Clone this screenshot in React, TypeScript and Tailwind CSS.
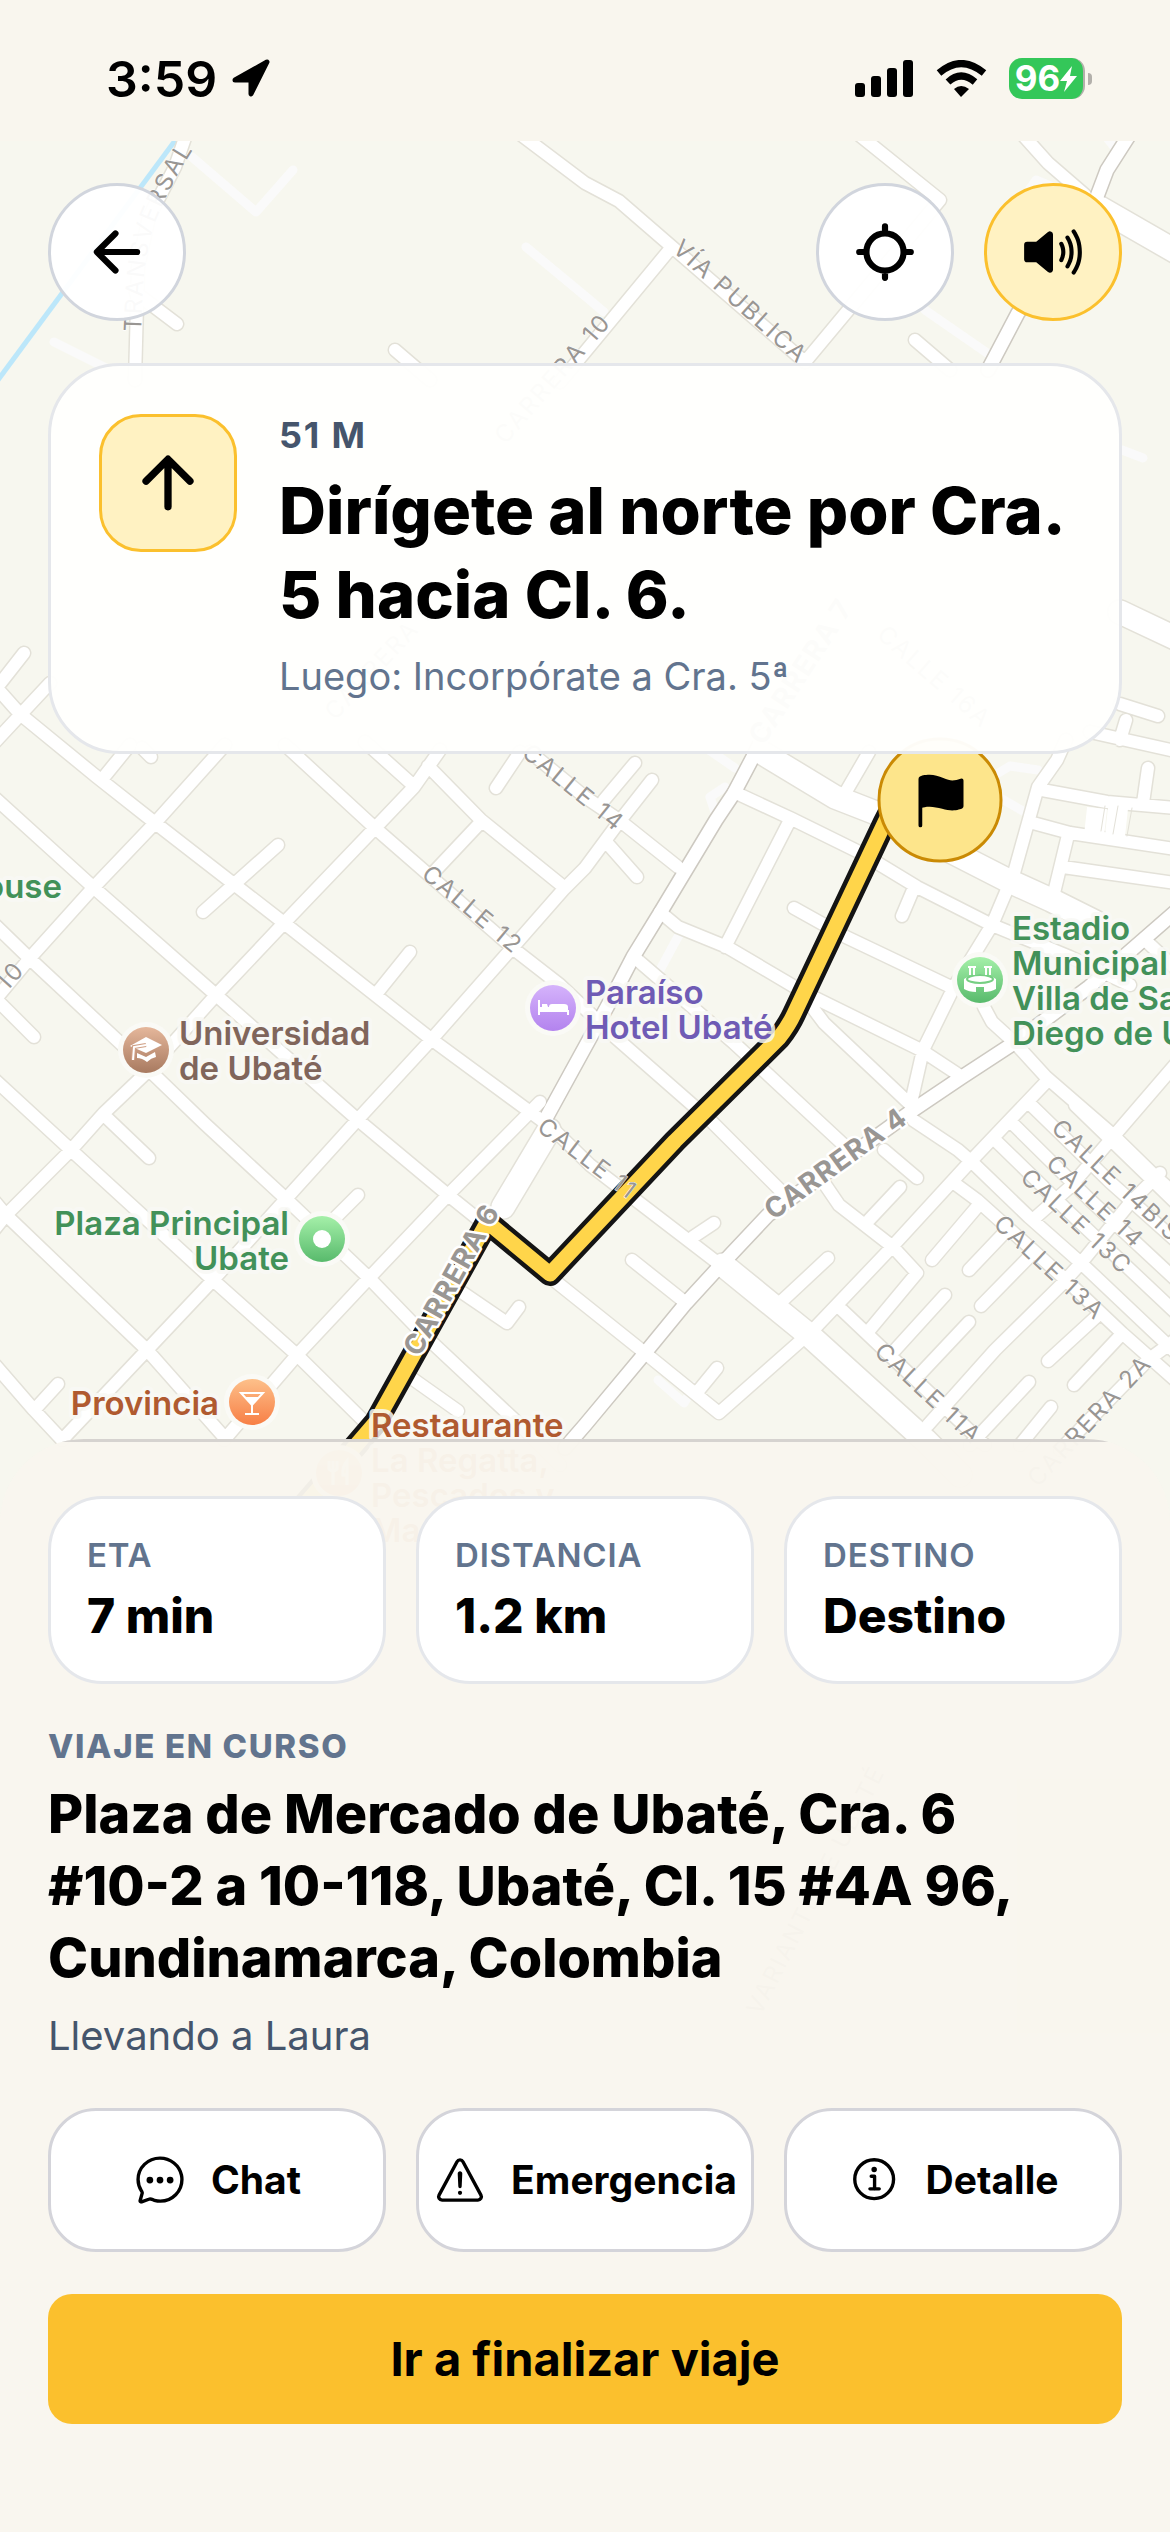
import React from "react";
import {
    IoArrowBackOutline,
    IoArrowUpOutline,
    IoChatbubbleEllipsesOutline,
    IoFlag,
    IoInformationCircleOutline,
    IoLocate,
    IoVolumeHigh,
    IoWarningOutline,
} from "react-icons/io5";

const streets = [
    "M-5 686 L20 714 L97 777 L154 822 L284 923 L431 1039 L552 1128 L590 1165 L697 1247 L723 1267",
    "M-5 798 L93 887 L216 995 L358 1120 L448 1195 L550 1277 L585 1305 L645 1353 L719 1413 L805 1337",
    "M-5 925 L28 957 L146 1067 L205 1124 L285 1198 L369 1278 L425 1336 L520 1425 L560 1465",
    "M-5 1080 L71 1150 L213 1280 L297 1355 L375 1432",
    "M-10 1196 L6 1215 L147 1350 L224 1437",
    "M-5 1365 L34 1410 L62 1440",
    "M106 1117 L149 1158",
    "M285 745 L375 828 L515 950 L560 985 L615 1037 L712 1122 L785 1195",
    "M365 742 L414 786",
    "M428 766 L481 820 L565 888",
    "M530 752 L585 797 L619 820 L678 867",
    "M607 843 L637 877",
    "M225 745 L155 823 L93 888 L30 958 L-5 1000",
    "M0 1003 L34 1037",
    "M440 750 L414 787 L375 828 L284 923 L216 995 L146 1073 L104 1113 L71 1150 L6 1215 L-10 1235",
    "M652 780 L619 822 L585 868 L563 890 L513 947 L431 1040 L360 1117 L285 1200 L213 1280 L147 1350 L62 1440",
    "M635 763 L604 800",
    "M278 845 L203 912",
    "M410 952 L377 993",
    "M481 822 L433 873",
    "M520 752 L496 788",
    "M104 777 L130 745",
    "M142 748 L151 757",
    "M540 1102 L448 1195 L369 1278 L297 1355 L224 1440",
    "M358 1195 L323 1230",
    "M463 1293 L507 1323 L519 1307",
    "M410 1377 L458 1411",
    "M58 1384 L37 1407",
    "M734 792 L790 818 L861 853 L917 887 L992 925 L1070 957 L1130 985",
    "M660 912 L678 927 L727 947 L805 993 L921 1050 L962 1077",
    "M794 908 L846 937 L951 987",
    "M790 820 L725 947",
    "M869 752 L844 795",
    "M913 890 L902 916",
    "M1066 740 L1057 760 L1038 787 L1014 873 L992 925 L954 987 L923 1050 L911 1103",
    "M1042 790 L1107 802 L1175 808",
    "M1033 823 L1070 833 L1175 849",
    "M1068 835 L1053 897",
    "M1063 867 L1175 883",
    "M1148 768 L1143 803",
    "M1090 732 L1175 751",
    "M809 1003 L824 1023 L913 1107",
    "M634 957 L734 1043 L846 1147",
    "M824 1183 L839 1205 L893 1247 L917 1273 L867 1333",
    "M984 1007 L992 1022 L1014 1042 L1046 1077 L1113 1135 L1156 1177 L1175 1194",
    "M1175 1065 L1113 1137 L1070 1187 L1036 1217",
    "M1048 1080 L1007 1123 L969 1163 L891 1248 L813 1330",
    "M913 1120 L958 1150 L973 1163 L1029 1217 L1081 1263 L1175 1352",
    "M954 1183 L977 1200 L1066 1280 L1122 1333 L1175 1380",
    "M995 1140 L1070 1213 L1175 1312",
    "M1012 1123 L1090 1200 L1175 1279",
    "M1029 1103 L1110 1182 L1175 1240",
    "M1075 1105 L1175 1202",
    "M1145 940 L1175 968",
    "M1160 1173 L1130 1203 L1081 1263 L1063 1283 L995 1350 L928 1425",
    "M1175 1340 L1148 1360 L1060 1450",
    "M900 1187 L869 1220",
    "M828 1258 L783 1300",
    "M714 1223 L693 1237",
    "M632 1260 L686 1303",
    "M717 1368 L699 1390",
    "M977 1207 L932 1260",
    "M1007 1230 L969 1270",
    "M1029 1257 L981 1306",
    "M945 1295 L895 1350",
    "M969 1322 L921 1373",
    "M842 1310 L902 1367 L985 1445",
    "M1096 1317 L1048 1361",
    "M1119 1337 L1074 1385",
    "M1029 1382 L970 1445",
    "M1051 1407 L1020 1445",
    "M884 1150 L917 1178",
    "M186 135 L175 167 L149 217 L138 267 L135 380",
    "M136 293 L177 324",
    "M520 134 L585 183 L619 201 L671 246 L805 362",
    "M671 248 L585 352 L560 382",
    "M395 350 L430 380",
    "M858 134 L940 200 L805 362",
    "M1022 134 L1048 163 L1085 195",
    "M915 340 L950 370",
    "M24 653 L-5 690",
    "M50 683 L-5 742",
    "M1120 704 L1158 716",
    "M1126 720 L1120 740",
];

const avenues = [
    "M764 735 L753 757 L734 793 L716 820 L660 913 L633 957 L607 1007 L545 1120",
    "M1175 912 L1089 987 L1014 1043 L962 1077 L913 1110 L768 1215 L719 1267 L686 1303 L645 1353 L585 1425 L565 1448",
    "M1130 134 L1107 170 L1090 215 L1018 313 L988 370",
];

const wideRoads = [
    "M723 1265 L809 1335 L925 1440 L960 1475",
    "M764 754 L835 797 L876 813 L1007 880 L1051 900 L1095 922",
    "M1100 208 L1180 254",
    "M1120 612 L1175 638",
    "M549 1130 L503 1207",
];

const paths = [
    "M192 157 L256 212 L293 170",
    "M54 342 L110 370",
    "M526 247 L585 296 L604 312",
    "M925 310 L990 355",
    "M1104 134 L1115 148",
    "M1022 200 L1036 180 L1060 190",
    "M1122 450 L1143 458",
    "M709 750 L735 768",
    "M995 775 L1010 766 L1038 770",
    "M1000 798 L1030 815",
    "M680 933 L660 970",
    "M658 1380 L684 1403 L694 1386",
    "M725 787 L710 797 L715 812",
];

const streetLabels = [
    { text: "CALLE 12", x: 473, y: 909, angle: 40 },
    { text: "CALLE 14", x: 574, y: 787, angle: 39 },
    { text: "CALLE 11", x: 588, y: 1158, angle: 37 },
    { text: "CALLE 14BIS", x: 1117, y: 1180, angle: 43 },
    { text: "CALLE 14", x: 1096, y: 1201, angle: 43 },
    { text: "CALLE 13C", x: 1077, y: 1221, angle: 43 },
    { text: "CALLE 13A", x: 1050, y: 1267, angle: 43 },
    { text: "CALLE 11A", x: 929, y: 1393, angle: 43 },
    { text: "CALLE 16A", x: 935, y: 676, angle: 41 },
    { text: "CARRERA 2A", x: 1089, y: 1420, angle: -47 },
    { text: "CARRERA 10", x: 552, y: 378, angle: -49 },
    { text: "CARRERA 9", x: 380, y: 660, angle: -47 },
    { text: "CARRERA 10", x: -35, y: 1025, angle: -48 },
    { text: "VÍA PUBLICA", x: 741, y: 301, angle: 42 },
    { text: "VARIANTE DE UBATÉ", x: 815, y: 1890, angle: -63 },
];

const avenueLabels = [
    { text: "CARRERA 6", x: 452, y: 1280, angle: -61 },
    { text: "CARRERA 4", x: 836, y: 1164, angle: -36 },
    { text: "CARRERA 7", x: 801, y: 672, angle: -57 },
];

const places = [
    { lines: ["House"], x: 62, y: 898, color: "#429159", anchor: "end" },
    { lines: ["Universidad", "de Ubaté"], x: 179, y: 1045, color: "#80655b", anchor: "start" },
    { lines: ["Paraíso", "Hotel Ubaté"], x: 585, y: 1004, color: "#6f5bb5", anchor: "start" },
    { lines: ["Estadio", "Municipal", "Villa de San", "Diego de Ubaté"], x: 1012, y: 940, color: "#429159", anchor: "start" },
    { lines: ["Plaza Principal", "Ubate"], x: 289, y: 1235, color: "#429159", anchor: "end" },
    { lines: ["Provincia"], x: 219, y: 1415, color: "#b05a30", anchor: "end" },
    { lines: ["Restaurante", "La Regatta,", "Pescados y", "Mariscos"], x: 371, y: 1437, color: "#b05a30", anchor: "start" },
] as const;

const route = [
    "M905 783 L885 822 L794 1014 Q789 1025 779 1038 L675 1141 L550 1274 L486 1221",
    "M489 1219 L376 1422 L352 1450 L300 1510",
].join(" ");

const Marker = ({ x, y, fill, children }: { x: number; y: number; fill: string; children?: React.ReactNode }) => (
    <g transform={`translate(${x} ${y})`}>
        <circle r="28" fill="#fafaf6" />
        <circle r="23" fill={`url(#${fill})`} />
        {children}
    </g>
);

const Gradient = ({ id, from, to }: { id: string; from: string; to: string }) => (
    <linearGradient id={id} x1="0" y1="0" x2="0" y2="1">
        <stop offset="0" stopColor={from} />
        <stop offset="1" stopColor={to} />
    </linearGradient>
);

const RoadLayer = ({ lines, color, width }: { lines: string[]; color: string; width: number }) => (
    <path d={lines.join(" ")} stroke={color} strokeWidth={width} />
);

const CityMap = () => (
    <svg
        className="absolute inset-0 h-full w-full"
        viewBox="0 141 1170 2391"
        preserveAspectRatio="xMidYMin slice"
        role="img"
        aria-label="Mapa de Ubaté"
    >
        <defs>
            <Gradient id="brown" from="#e5b79b" to="#a87a60" />
            <Gradient id="purple" from="#d5b3fb" to="#b383ee" />
            <Gradient id="green" from="#a5f0a9" to="#58ba6c" />
            <Gradient id="orange" from="#fdc08a" to="#f77f46" />
            <path id="transversal" d="M141 332 L143 290 Q145 252 156 220 Q168 190 190 154" />
        </defs>

        <rect y="141" width="1170" height="2391" fill="#f7f7ef" />
        <path d="M177 138 L-5 384" stroke="#bce7fa" strokeWidth="5" />

        <g fill="none" strokeLinecap="round" strokeLinejoin="round">
            <RoadLayer lines={paths} color="#fafafa" width={9} />
            <RoadLayer lines={streets} color="#e3e1d8" width={15} />
            <RoadLayer lines={wideRoads} color="#e3e1d8" width={26} />
            <RoadLayer lines={avenues} color="#cdc9c1" width={16} />
            <RoadLayer lines={streets} color="#ffffff" width={12} />
            <RoadLayer lines={wideRoads} color="#ffffff" width={23} />
            <RoadLayer lines={avenues} color="#ffffff" width={13} />
            <path d="M1097 808 L1094 836 M1118 808 L1115 836" stroke="#ffffff" strokeWidth="20" strokeLinecap="butt" />
            <path d="M1105 806 L1101 831 M1118 806 L1113 834 M1132 808 L1127 836" stroke="#e3e1d8" strokeWidth="1" />
            <path d={route} stroke="#141414" strokeWidth="24" strokeLinecap="butt" />
            <path d={route} stroke="#ffd54a" strokeWidth="15" strokeLinecap="butt" />
        </g>

        <g fill="#999693" fontFamily="Inter, sans-serif" textAnchor="middle">
            <g fontSize="24" letterSpacing="2" stroke="#ffffff" strokeWidth="1" paintOrder="stroke">
                {streetLabels.map((label, i) => (
                    <text key={i} transform={`translate(${label.x} ${label.y}) rotate(${label.angle})`} dy="9">
                        {label.text}
                    </text>
                ))}
                <text textAnchor="start">
                    <textPath href="#transversal">TRANSVERSAL</textPath>
                </text>
            </g>
            <g fontSize="28" fontWeight="700" letterSpacing="1" stroke="#ffffff" strokeWidth="5" strokeLinejoin="round" paintOrder="stroke">
                {avenueLabels.map((label) => (
                    <text key={label.text} transform={`translate(${label.x} ${label.y}) rotate(${label.angle})`} dy="9">
                        {label.text}
                    </text>
                ))}
            </g>
        </g>

        <Marker x={146} y={1050} fill="brown">
            <path d="M-16 -4 L0 -13 L16 -5 L0 3 Z" fill="#fff" />
            <path d="M-9 3 L0 7 L9 2 L10 7 Q5 8 1 12 Q-4 8 -9 8 Z" fill="#fff" />
            <path d="M0 -5 L-12 -3 L-13 10" fill="none" stroke="#cf9f84" strokeWidth="4" />
            <path d="M0 -5 L-12 -3 L-13 10" fill="none" stroke="#fff" strokeWidth="2" />
        </Marker>
        <Marker x={553} y={1008} fill="purple">
            <path d="M-14 -8 V7 M-14 3 H15 V7 M-14 0 H15" stroke="#fff" strokeWidth="2" fill="none" />
            <path d="M-11 -4 H-6 L-5 -1 H-11 Z M-4 -1 Q-4 -4 -1 -4 H11 Q15 -4 15 -1 Z M-14 1 H15 V4 H-14 Z" fill="#fff" />
        </Marker>
        <Marker x={980} y={980} fill="green">
            <path d="M-16 -1 Q0 -11 16 -1 V9 Q11 12 4 12 V7 H-4 V12 Q-11 12 -16 9 Z" fill="#fff" />
            <ellipse cy="-1" rx="13" ry="4" fill="none" stroke="#76cf83" strokeWidth="2" />
            <path d="M-12 -13 H-4 M4 -13 H12 M-10 -13 V-5 M-6 -13 V-5 M6 -13 V-5 M10 -13 V-5" stroke="#fff" strokeWidth="2" />
        </Marker>
        <Marker x={322} y={1239} fill="green">
            <circle r="9" fill="#fff" />
        </Marker>
        <Marker x={252} y={1402} fill="orange">
            <path d="M-11 -9 H11 L0 3 Z M0 2 V12 M-7 12 H7" fill="none" stroke="#fff" strokeWidth="2" />
            <path d="M-7 -5 H7 L0 3 Z" fill="#fff" />
        </Marker>
        <Marker x={339} y={1473} fill="orange">
            <path d="M-6 -12 V12 M-10 -12 V-4 Q-6 0 -2 -4 V-12 M8 12 V-12 Q3 -6 4 2 H8" fill="none" stroke="#fff" strokeWidth="3" />
        </Marker>

        <g fontFamily="Inter, sans-serif" fontSize="33" fontWeight="600" stroke="#f9f9f5" strokeOpacity="0.85" strokeWidth="8" strokeLinejoin="round" paintOrder="stroke">
            {places.map((place) => (
                <text key={place.lines[0]} y={place.y} fill={place.color} textAnchor={place.anchor}>
                    {place.lines.map((line, i) => (
                        <tspan key={line} x={place.x} dy={i === 0 ? 0 : 35}>
                            {line}
                        </tspan>
                    ))}
                </text>
            ))}
        </g>

        <g transform="translate(940 800)">
            <circle r="61" fill="#fde58b" stroke="#ca8a04" strokeWidth="3" />
            <IoFlag x="-29" y="-29" size={60} />
        </g>
    </svg>
);

const StatusBar = () => (
    <header className="flex h-[141px] items-center justify-between bg-[#f9f6ee] pt-4 pr-[78px] pl-[106px]">
        <div className="flex items-center gap-[14px]">
            <span className="text-[50px] leading-none font-semibold">3:59</span>
            <svg className="h-10 w-10" viewBox="0 0 40 40" aria-label="Ubicación">
                <path
                    d="M36 4 L20 36 V22 H4 Z"
                    transform="translate(0 -1)"
                    stroke="#000"
                    strokeWidth="5"
                    strokeLinejoin="round"
                />
            </svg>
        </div>
        <div className="flex items-center gap-[22px]">
            <svg className="h-[38px] w-[59px]" viewBox="0 0 59 38" aria-label="Señal">
                <rect y="23" width="10" height="14" rx="3" />
                <rect x="16" y="16" width="10" height="21" rx="3" />
                <rect x="32" y="8" width="10" height="29" rx="3" />
                <rect x="48" width="10" height="37" rx="3" />
            </svg>
            <svg className="h-[38px] w-[51px]" viewBox="0 0 51 38" aria-label="Wi-Fi">
                <path d="M3 13 Q25 -6 48 13" fill="none" stroke="#000" strokeWidth="7" />
                <path d="M12 22 Q25 10 39 22" fill="none" stroke="#000" strokeWidth="7" />
                <path d="M18 29 Q25 23 33 29 L25 37 Z" />
            </svg>
            <div className="flex items-center gap-[3px]">
                <div className="flex h-[41px] w-[76px] items-center justify-center rounded-[13px] border-r-2 border-[#b3b0ab] bg-[#34c759] text-white">
                    <span className="text-[35px] leading-none font-bold">96</span>
                    <svg className="h-[26px] w-[17px]" viewBox="0 0 17 26" fill="currentColor" aria-label="Cargando">
                        <path d="M12 0 L0 15 H7 L4 26 L17 10 H10 Z" />
                    </svg>
                </div>
                <div className="h-3 w-1 rounded-r-full bg-[#b3b0ab]" />
            </div>
        </div>
    </header>
);

const roundButton = "flex size-[138px] items-center justify-center rounded-full border-3";

const MapControls = () => (
    <div className="flex justify-between">
        <button type="button" aria-label="Volver" className={`${roundButton} border-[#d1d5dd] bg-white/95`}>
            <IoArrowBackOutline size={66} />
        </button>
        <div className="flex gap-[30px]">
            <button type="button" aria-label="Centrar mapa" className={`${roundButton} border-[#d1d5dd] bg-white/95`}>
                <IoLocate size={66} />
            </button>
            <button type="button" aria-label="Sonido" className={`${roundButton} border-[#fbc02d] bg-[#fff2c2]`}>
                <IoVolumeHigh size={66} />
            </button>
        </div>
    </div>
);

const NextStep = () => (
    <section className="flex items-start gap-[42px] rounded-[72px] border-3 border-[#e5e7eb] bg-[#fffffd]/97 p-12">
        <div className="flex size-[138px] shrink-0 items-center justify-center rounded-[42px] border-3 border-[#fbc02d] bg-[#fff2c2]">
            <IoArrowUpOutline size={78} />
        </div>
        <div className="flex flex-col gap-3">
            <p className="text-[36px] leading-[43px] font-bold tracking-wider text-slate-600">51 M</p>
            <h1 className="text-[65px] leading-[84px] font-extrabold">Dirígete al norte por Cra. 5 hacia Cl. 6.</h1>
            <p className="text-[38px] leading-[54px] text-slate-500">Luego: Incorpórate a Cra. 5ª</p>
        </div>
    </section>
);

const stats = [
    { label: "ETA", value: "7 min" },
    { label: "DISTANCIA", value: "1.2 km" },
    { label: "DESTINO", value: "Destino" },
];

const actions = [
    { label: "Chat", icon: <IoChatbubbleEllipsesOutline size={54} className="shrink-0" /> },
    { label: "Emergencia", icon: <IoWarningOutline size={54} className="shrink-0" /> },
    { label: "Detalle", icon: <IoInformationCircleOutline size={54} className="shrink-0" /> },
];

const TripSheet = () => (
    <section className="relative mt-auto flex flex-col gap-[42px] overflow-hidden rounded-t-[84px] bg-[#f9f6ee]/97 px-12 pt-[57px] pb-[108px]">
        <div className="absolute inset-x-0 top-0 h-[3px] bg-[#d6d3d0]" />
        <dl className="grid grid-cols-3 gap-[30px]">
            {stats.map((stat) => (
                <div key={stat.label} className="flex flex-col gap-3 rounded-[54px] border-3 border-[#e5e7eb] bg-white p-9">
                    <dt className="text-[33px] leading-10 font-semibold tracking-wide text-slate-500">{stat.label}</dt>
                    <dd className="text-[48px] leading-[58px] font-extrabold">{stat.value}</dd>
                </div>
            ))}
        </dl>

        <div className="flex flex-col gap-3">
            <p className="text-[33px] leading-10 font-extrabold tracking-wider text-slate-500">VIAJE EN CURSO</p>
            <h2 className="text-[54px] leading-[72px] font-extrabold">
                Plaza de Mercado de Ubaté, Cra. 6 <span className="whitespace-nowrap">#10-2</span> a 10-118, Ubaté,
                Cl. 15 #4A 96, Cundinamarca, Colombia
            </h2>
            <p className="text-[40px] leading-[60px] text-slate-600">Llevando a Laura</p>
        </div>

        <div className="grid grid-cols-3 gap-[30px]">
            {actions.map((action) => (
                <button
                    key={action.label}
                    type="button"
                    className="flex h-36 items-center justify-center gap-6 rounded-[48px] border-3 border-[#d4d4da] bg-white text-[39px] font-bold"
                >
                    {action.icon}
                    {action.label}
                </button>
            ))}
        </div>

        <button type="button" className="h-[130px] rounded-3xl bg-[#fbc02d] text-[47px] font-bold">
            Ir a finalizar viaje
        </button>
    </section>
);

const App = () => {
    return (
        <div className="flex min-h-screen flex-col bg-[#f7f7ef] font-['Inter',sans-serif] text-black">
            <StatusBar />
            <main className="relative flex flex-1 flex-col overflow-hidden">
                <CityMap />
                <div className="relative flex flex-1 flex-col gap-[42px]">
                    <div className="flex flex-col gap-[42px] px-12 pt-[42px]">
                        <MapControls />
                        <NextStep />
                    </div>
                    <TripSheet />
                </div>
            </main>
        </div>
    );
};

export default App;
